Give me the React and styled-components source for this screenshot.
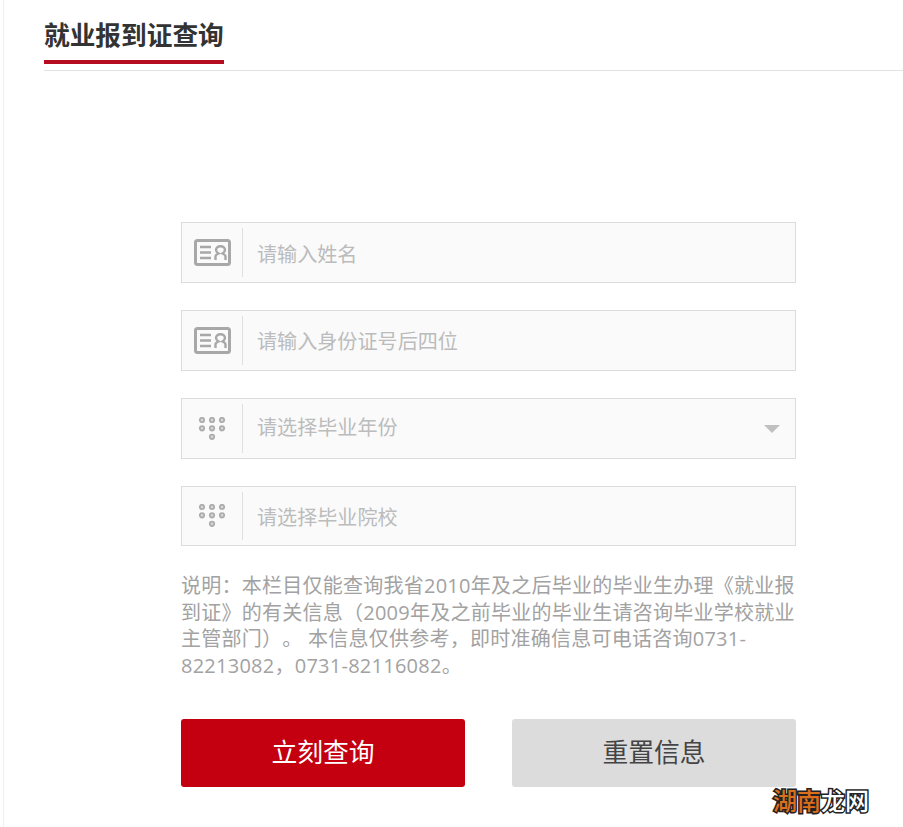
import React from "react";
import styled, { createGlobalStyle } from "styled-components";

const Global = createGlobalStyle`
  html, body { margin: 0; padding: 0; background: #fff; }
  body { font-family: "Noto Sans CJK SC", "Open Sans", sans-serif; text-spacing-trim: space-all; }
`;
const FONT = `"Open Sans", "Noto Sans CJK SC", sans-serif`;

const Page = styled.div`
  position: relative;
  width: 903px;
  height: 827px;
  overflow: hidden;
  box-sizing: border-box;
`;
const Main = styled.main`
  margin-left: 3px;
  height: 827px;
  box-sizing: border-box;
  border-left: 1px solid #f0f0f0;
  padding: 0 0 0 40px;
`;
const TitleBar = styled.div`
  height: 70px;
  border-bottom: 1px solid #e2e2e2;
`;
const Title = styled.h1`
  display: inline-block;
  box-sizing: border-box;
  height: 64px;
  margin: 0;
  padding-top: 15px;
  border-bottom: 4px solid #b50d1f;
  font: 700 25.7px/38px "Noto Sans CJK SC", sans-serif;
  color: #333;
`;
const Form = styled.form`
  width: 615px;
  margin: 151px 0 0 137px;
  display: flex;
  flex-direction: column;
`;
const Field = styled.div`
  box-sizing: border-box;
  height: ${p => p.$h || 61}px;
  margin-bottom: 27px;
  display: flex;
  align-items: center;
  background: #fafafa;
  border: 1px solid #dcdcdc;
`;
const IconCell = styled.div`
  width: 60px;
  height: calc(100% - 10px);
  flex: none;
  display: flex;
  align-items: center;
  justify-content: center;
  border-right: 1px solid #e0e0e0;
`;
const TextInput = styled.input`
  flex: 1;
  min-width: 0;
  height: 100%;
  box-sizing: border-box;
  padding: ${p => p.$pt || 0}px 0 ${p => p.$pb || 0}px 14px;
  border: 0;
  outline: 0;
  background: transparent;
  font: 20.1px "Noto Sans CJK SC", sans-serif;
  color: #555;
  &::placeholder { color: #bcbcbc; opacity: 1; }
`;
const Arrow = styled.span`
  width: 0;
  height: 0;
  margin-right: 15px;
  border-left: 8px solid transparent;
  border-right: 8px solid transparent;
  border-top: 8px solid #c0c0c0;
`;
const Note = styled.p`
  margin: 0 0 40px;
  font: 20px/26.5px ${FONT};
  letter-spacing: 0.25px;
  color: #a2a2a2;
`;
const Actions = styled.div`
  display: flex;
  justify-content: space-between;
`;
const Button = styled.button`
  width: 284px;
  height: 68px;
  border: 0;
  padding: 0 0 6px;
  border-radius: 3px;
  font: 25.8px "Noto Sans CJK SC", sans-serif;
  background: ${p => (p.$primary ? "#c40010" : "#dcdcdc")};
  color: ${p => (p.$primary ? "#fff" : "#444")};
`;
const Watermark = styled.div`
  position: absolute;
  left: 773px;
  top: 785px;
  font: 500 24px/30px "Noto Sans CJK SC", sans-serif;
  white-space: nowrap;
  -webkit-text-stroke: 3px #222;
  paint-order: stroke fill;
  color: #fff;
`;
const Orange = styled.span`
  color: #dc6f1c;
`;

const CardIcon = () => (
  <svg width="37" height="27" viewBox="0 0 37 27" fill="none" stroke="#a8a8a8">
    <rect x="1.5" y="1.5" width="34" height="24" rx="2" strokeWidth="3" />
    <path d="M6 8h11M6 13.5h11M6 19h11" strokeWidth="2.4" />
    <path d="M21.5 21v-3.5c0-1.5 1.2-2.300 3-3-1.300-.8-2.500-1.800-2.500-3.500 0-2.300 2-3.800 4.500-3.800s4.500 1.500 4.500 3.800c0 1.700-1.200 2.700-2.500 3.500 1.800.7 3 1.500 3 3V21" strokeWidth="2.4" />
  </svg>
);
const DotsIcon = () => (
  <svg width="26" height="24" viewBox="0 0 26 24" fill="#d8d8d8" stroke="#acacac" strokeWidth="1.8">
    {[3, 13, 23].map(x => [3, 11.3].map(y => <circle key={`${x}-${y}`} cx={x} cy={y} r="2.2" />))}
    <circle cx="13" cy="19.8" r="2.2" />
  </svg>
);

export default function App() {
  return (
    <Page>
      <Global />
      <Main>
        <TitleBar><Title>就业报到证查询</Title></TitleBar>
        <Form>
          <Field>
            <IconCell><CardIcon /></IconCell>
            <TextInput $pt={2} placeholder="请输入姓名" />
          </Field>
          <Field>
            <IconCell><CardIcon /></IconCell>
            <TextInput placeholder="请输入身份证号后四位" />
          </Field>
          <Field>
            <IconCell><DotsIcon /></IconCell>
            <TextInput $pb={4} placeholder="请选择毕业年份" readOnly />
            <Arrow />
          </Field>
          <Field $h={60}>
            <IconCell><DotsIcon /></IconCell>
            <TextInput placeholder="请选择毕业院校" readOnly />
          </Field>
          <Note>说明：本栏目仅能查询我省2010年及之后毕业的毕业生办理《就业报到证》的有关信息（2009年及之前毕业的毕业生请咨询毕业学校就业主管部门）。 本信息仅供参考，即时准确信息可电话咨询0731-82213082，0731-82116082。</Note>
          <Actions>
            <Button type="button" $primary>立刻查询</Button>
            <Button type="button">重置信息</Button>
          </Actions>
        </Form>
      </Main>
      <Watermark><Orange>湖南</Orange>龙网</Watermark>
    </Page>
  );
}
